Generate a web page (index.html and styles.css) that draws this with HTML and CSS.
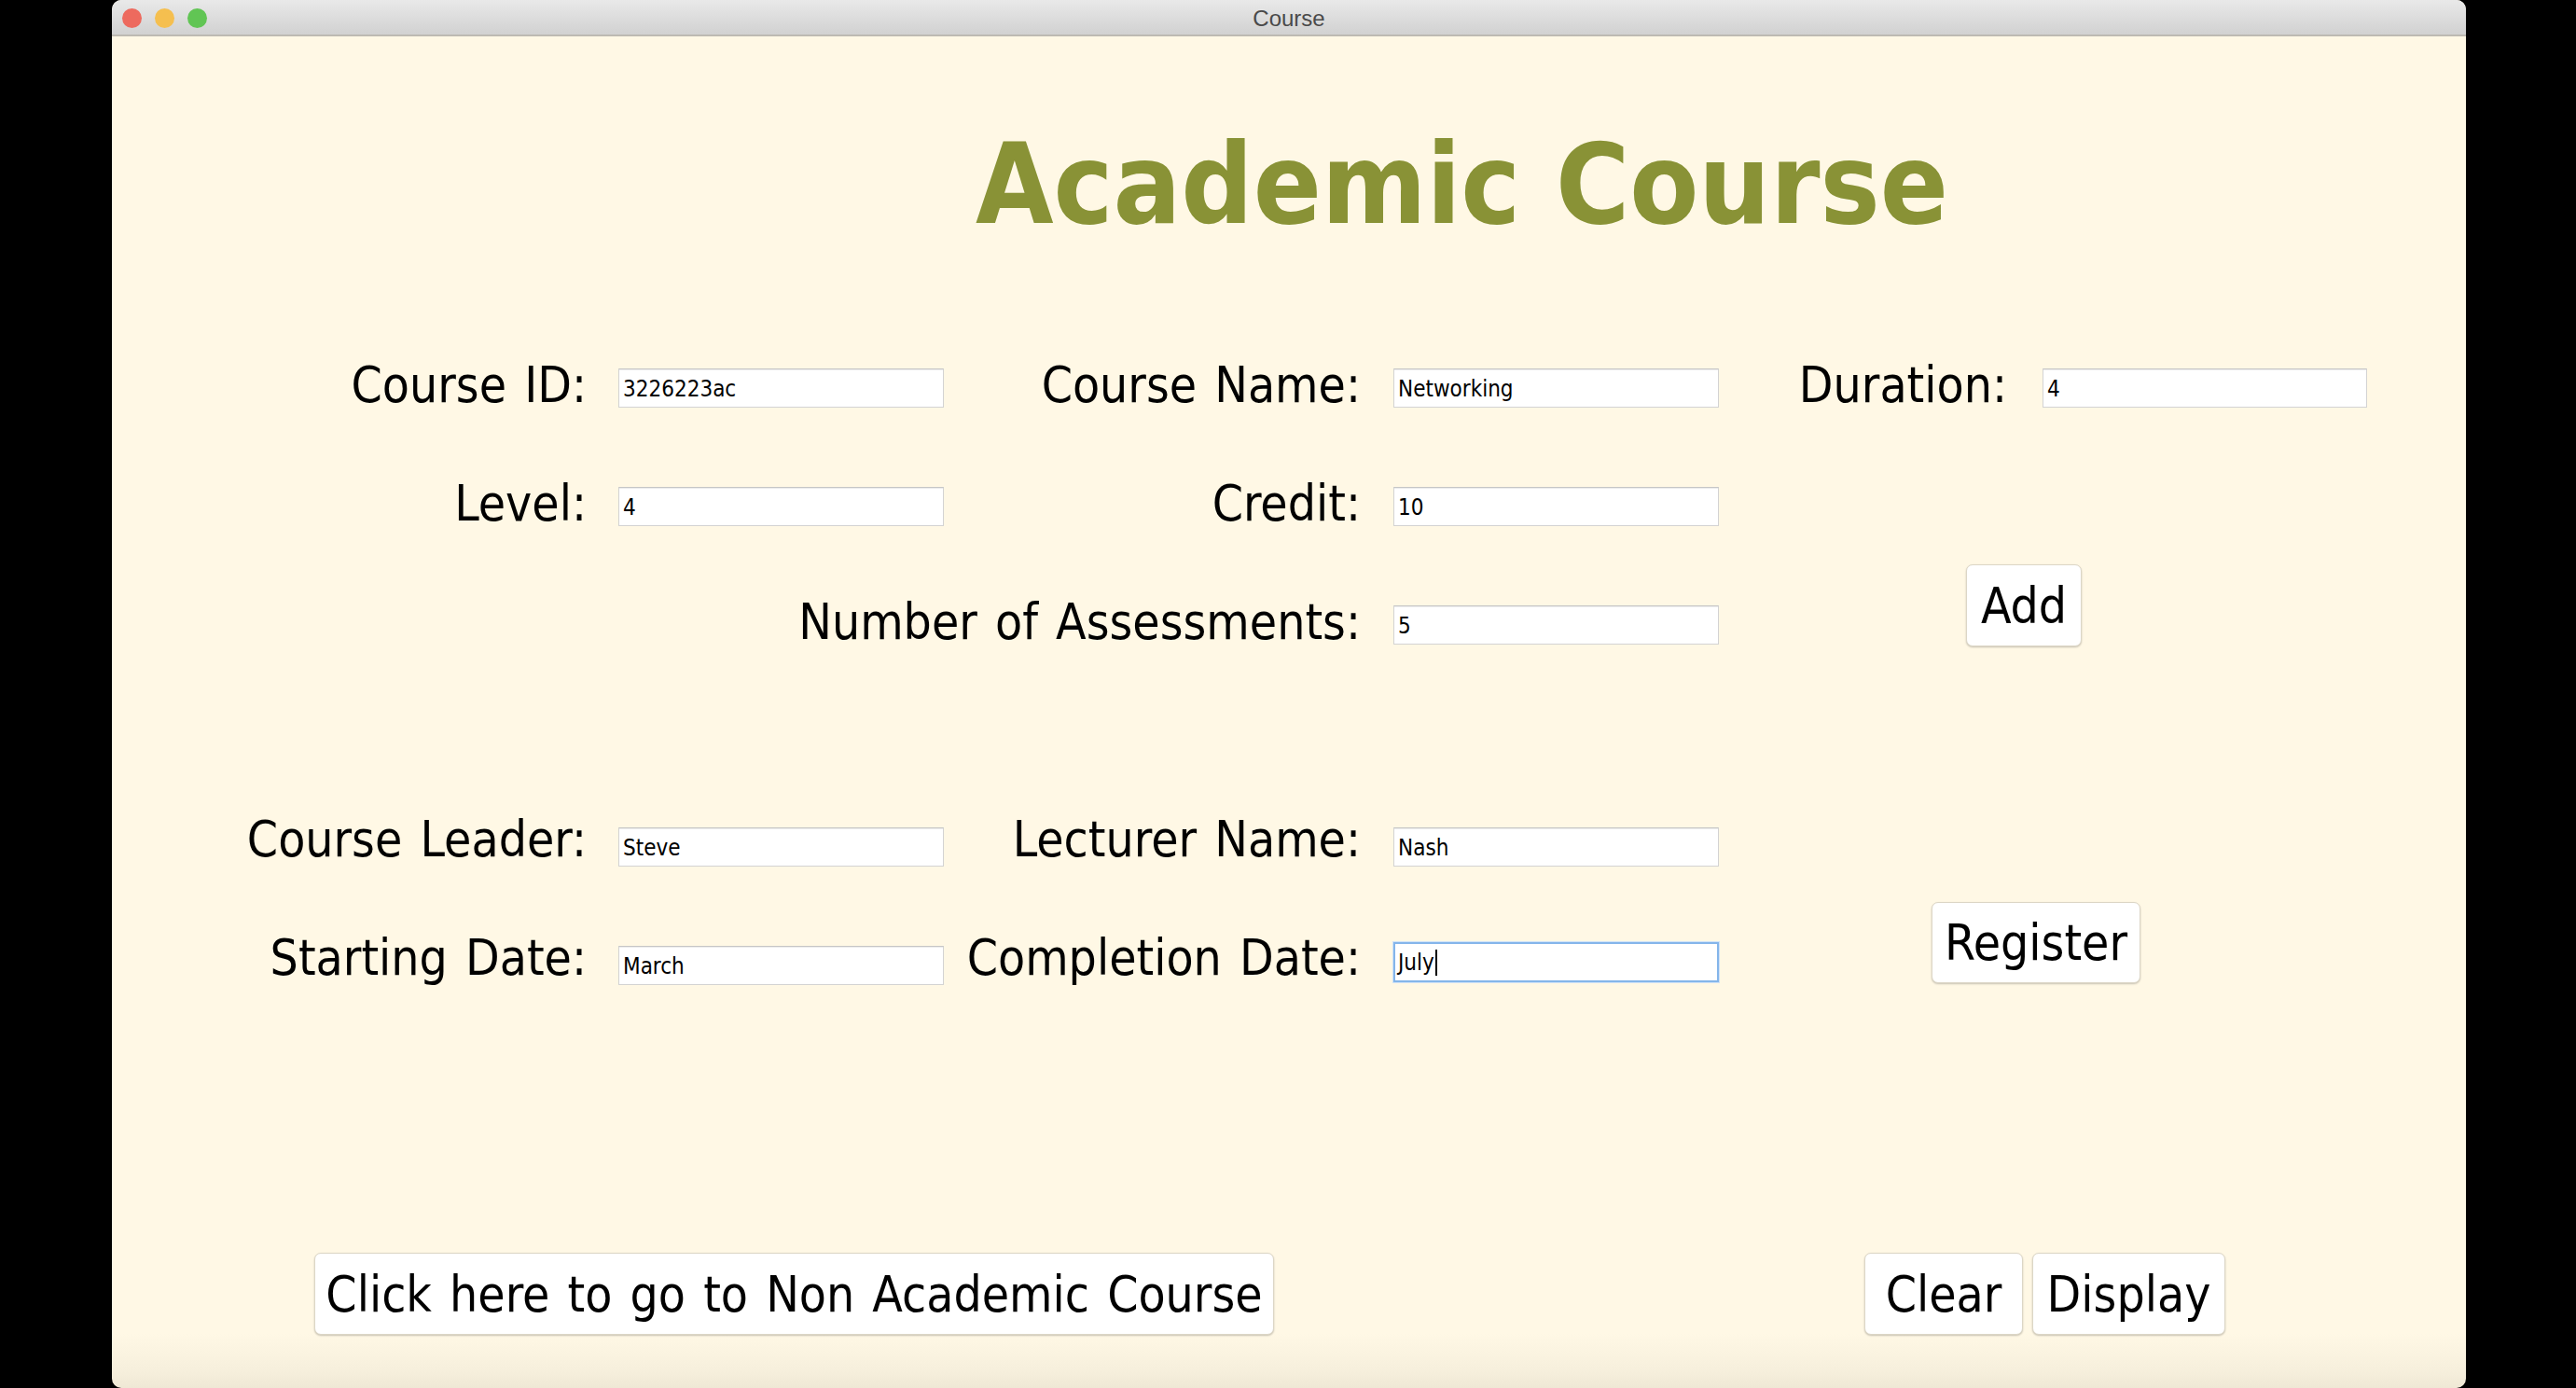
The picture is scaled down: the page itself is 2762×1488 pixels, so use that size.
FILE: index.html
```html
<!DOCTYPE html>
<html lang="en">
<head>
<meta charset="utf-8">
<title>Course</title>
<link rel="stylesheet" href="styles.css">
</head>
<body>
<div class="window">
  <div class="titlebar">
    <div class="lights">
      <span class="light red"></span>
      <span class="light yellow"></span>
      <span class="light green"></span>
    </div>
    <div class="wtitle">Course</div>
    <div class="tb-spacer"></div>
  </div>
  <div class="content">
    <h1 class="heading">Academic Course</h1>
    <div class="form">
      <div class="lbl r1 c1">Course ID:</div>
      <div class="field r1 f2">3226223ac</div>
      <div class="lbl r1 c3">Course Name:</div>
      <div class="field r1 f4">Networking</div>
      <div class="lbl r1 c5">Duration:</div>
      <div class="field r1 f6">4</div>

      <div class="lbl r2 c1">Level:</div>
      <div class="field r2 f2">4</div>
      <div class="lbl r2 c3">Credit:</div>
      <div class="field r2 f4">10</div>

      <div class="lbl r3 c13">Number of Assessments:</div>
      <div class="field r3 f4">5</div>
      <button class="btn btn-add r3">Add</button>

      <div class="lbl lbl-low r5 c1">Course Leader:</div>
      <div class="field r5 f2">Steve</div>
      <div class="lbl lbl-low r5 c3">Lecturer Name:</div>
      <div class="field r5 f4">Nash</div>

      <div class="lbl lbl-low r6 c1">Starting Date:</div>
      <div class="field r6 f2">March</div>
      <div class="lbl lbl-low r6 c3">Completion Date:</div>
      <div class="field r6 f4 focused">July<span class="caret"></span></div>
      <button class="btn btn-register r6">Register</button>
    </div>
    <div class="actions">
      <button class="btn btn-nonacademic">Click here to go to Non Academic Course</button>
      <button class="btn btn-clear">Clear</button>
      <button class="btn btn-display">Display</button>
    </div>
  </div>
</div>
</body>
</html>
```
FILE: styles.css
```css
html, body {
  margin: 0;
  padding: 0;
  background: #000;
}
body {
  width: 2762px;
  height: 1488px;
  overflow: hidden;
}
.window {
  margin-left: 120px;
  width: 2524px;
  height: 1488px;
  background: linear-gradient(to bottom, #fff8e5 0, #fff8e5 1430px, #f6efdc 1470px, #efe8d5 1488px);
  border-radius: 10px;
  overflow: hidden;
  font-family: "DejaVu Sans Condensed", "DejaVu Sans", sans-serif;
  font-stretch: condensed;
}
.titlebar {
  height: 37px;
  display: grid;
  grid-template-columns: 1fr auto 1fr;
  align-items: center;
  background: linear-gradient(to bottom, #e9e9e9, #d1d1d1);
  border-bottom: 2px solid #bdbab2;
}
.lights {
  display: flex;
  gap: 14px;
  padding-left: 11px;
  padding-top: 1px;
}
.light {
  width: 21px;
  height: 21px;
  border-radius: 50%;
  display: block;
}
.red { background: #ed6a5e; }
.yellow { background: #f5bf4f; }
.green { background: #61c554; }
.wtitle {
  font-family: "Liberation Sans", Arial, sans-serif;
  font-stretch: normal;
  font-size: 24px;
  color: #4a4a4a;
  padding-top: 3px;
}
.content {
  display: flex;
  flex-direction: column;
}
.heading {
  margin: 100px 0 0 0;
  padding-left: 926px;
  font-size: 120px;
  line-height: 117px;
  font-weight: bold;
  color: #899236;
  white-space: nowrap;
}
.form {
  margin-top: 139px;
  display: grid;
  grid-template-columns: 543px 349px 482px 349px 347px 348px;
  grid-template-rows: 42px 42px 42px 26px 42px 42px;
  row-gap: 85px;
}
.lbl {
  font-size: 53px;
  line-height: 36px;
  word-spacing: 4px;
  color: #000;
  text-align: right;
  white-space: nowrap;
  align-self: start;
}
.lbl-low {
  line-height: 26px;
}
.r1 { grid-row: 1; }
.r2 { grid-row: 2; }
.r3 { grid-row: 3; }
.r5 { grid-row: 5; }
.r6 { grid-row: 6; }
.c1 { grid-column: 1; padding-right: 34px; }
.c3 { grid-column: 3; padding-right: 35px; }
.c5 { grid-column: 5; padding-right: 38px; }
.c13 { grid-column: 1 / span 3; padding-right: 35px; }
.f2 { grid-column: 2; }
.f4 { grid-column: 4; }
.f6 { grid-column: 6; }
.field {
  box-sizing: border-box;
  height: 42px;
  background: #fff;
  border: 1px solid #d3d3d3;
  border-top-color: #c6c6c6;
  box-shadow: inset 0 1px 0 #ececec;
  padding: 3px 0 0 4px;
  font-size: 24px;
  line-height: 36px;
  color: #000;
  white-space: nowrap;
  overflow: hidden;
}
.field.focused {
  border: 2px solid #84b5ea;
  box-shadow: 0 0 0 1px #cfe2f7;
  padding: 2px 0 0 3px;
  margin-top: -4px;
  height: 43px;
}
.caret {
  display: inline-block;
  width: 2px;
  height: 28px;
  background: #000;
  vertical-align: -6px;
  margin-left: 1px;
}
.btn {
  box-sizing: border-box;
  height: 88px;
  padding: 0;
  margin: 0;
  background: #fff;
  border: 1px solid #dcd6c6;
  border-radius: 7px;
  box-shadow: 0 1px 2px rgba(0, 0, 0, 0.22);
  font-family: "DejaVu Sans Condensed", "DejaVu Sans", sans-serif;
  font-stretch: condensed;
  font-size: 53px;
  word-spacing: 4px;
  color: #000;
  display: flex;
  align-items: center;
  justify-content: center;
  white-space: nowrap;
}
.btn-add {
  grid-column: 5 / span 2;
  justify-self: start;
  align-self: end;
  width: 124px;
  margin: 0 0 -2px 265px;
}
.btn-register {
  grid-column: 5 / span 2;
  justify-self: start;
  align-self: end;
  width: 224px;
  height: 87px;
  margin: 0 0 2px 228px;
}
.actions {
  margin-top: 287px;
  display: flex;
  padding-left: 217px;
}
.btn-nonacademic {
  width: 1029px;
}
.btn-clear {
  width: 170px;
  margin-left: 633px;
}
.btn-display {
  width: 207px;
  margin-left: 10px;
}
```
